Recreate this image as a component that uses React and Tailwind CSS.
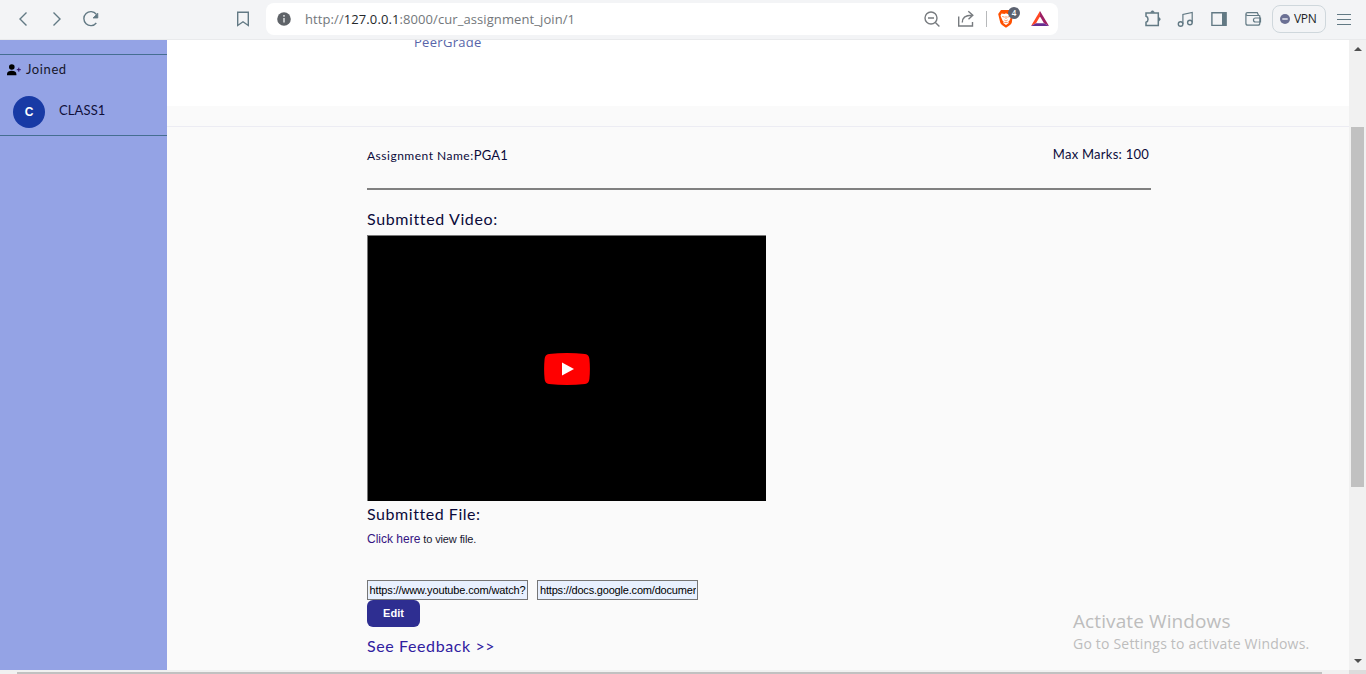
import React from 'react';

const heading = "font-['Lato',sans-serif] text-[#0b0b3b]";

function Icon({ children, className = '' }) {
  return (
    <svg
      viewBox="0 0 20 20"
      fill="none"
      stroke="currentColor"
      strokeWidth="1.4"
      className={`size-5 shrink-0 ${className}`}
    >
      {children}
    </svg>
  );
}

function AddressBar() {
  return (
    <div className="ml-[13px] flex h-8 w-[792px] shrink-0 items-center rounded-lg bg-white px-2 text-[#777b7f]">
      <Icon>
        <circle cx="10" cy="10" r="6.8" fill="#5f6368" stroke="none" />
        <path d="M10 9v4.5M10 6v1.7" stroke="#d5d7d9" strokeWidth="1.6" />
      </Icon>
      <div className="ml-[11px] whitespace-nowrap font-['Open_Sans',sans-serif] text-[13px] leading-5 tracking-[0.09px] text-[#73777b]">
        http://<span className="text-[#25282b]">127.0.0.1</span>:8000/cur_assignment_join/1
      </div>
      <Icon className="ml-auto">
        <circle cx="9" cy="9" r="6" />
        <path d="M6 9h6M13.4 13.4l4 4" />
      </Icon>
      <Icon className="ml-3.5">
        <path d="M2.7 7.5V17h13.8v-4M6.3 13.5c0-4.8 3.5-7.3 9.2-7.3M12.3 2.3l4.5 3.9-4.3 4" />
      </Icon>
      <div className="ml-2.5 h-4 w-px bg-[#b7b9bb]" />
      <div className="relative ml-[9px] size-5">
        <Icon>
          <path d="M5 1h9l3 4-1.2 8.5c-.4 2-3.3 3.6-5.8 5.2-2.500-1.600-5.200-3.200-5.800-5.200L2.200 5z" fill="#ff5000" stroke="none" />
          <path d="M5.500 4.500l3 .4L10 4.300l1.500.6 3-.4 1 2.300-2 4.700-1.200 1.300.5 1.200L10 15.900 7.200 14l.5-1.200-1.200-1.300-2-4.700z" fill="#fff" stroke="none" />
          <path d="M6.200 7.400l2.500.8M13.800 7.400l-2.500.8M10 7v3M8.300 11l1.700 1 1.700-1M8.300 13.500h3.400" stroke="#ff5000" strokeWidth=".6" />
        </Icon>
        <span className="absolute left-3 -top-[2px] flex size-3 items-center justify-center rounded-full bg-[#5c6270] font-['Open_Sans',sans-serif] text-[8px] font-semibold text-white">
          4
        </span>
      </div>
      <svg viewBox="0 0 20 20" className="ml-3.5 size-5">
        <path d="M10 2L1 17l5-2.8L10 7.5z" fill="#ff4724" />
        <path d="M10 2l9 15-5-2.8L10 7.5z" fill="#9e1f63" />
        <path d="M1 17h18l-5-2.8H6z" fill="#662d91" />
      </svg>
    </div>
  );
}

function Toolbar() {
  return (
    <header className="flex h-10 shrink-0 items-center border-b border-[#e9eaec] bg-[#f3f4f6] pb-px pl-[13px] text-[#627984]">
      <Icon><path d="M13.5 3.5L7 10l6.5 6.5" /></Icon>
      <Icon className="ml-3.5"><path d="M6.5 3.5L13 10l-6.5 6.5" /></Icon>
      <Icon className="ml-3.5">
        <path d="M15.3 5.2A7 7 0 1 0 15.3 14" />
        <path d="M16.8 4.2v4.8h-4.8z" fill="currentColor" strokeWidth=".8" />
      </Icon>
      <Icon className="ml-[132px]">
        <path d="M4.7 3.2h10.6v13.3L10 12.8l-5.3 3.7z" />
      </Icon>
      <AddressBar />
      <Icon className="ml-[85px]">
        <path d="M3 4h12.3v12.5H3v-3.2c2.7-.8 2.7-5.200 0-6z" strokeWidth="1.5" />
        <path d="M7.7 3.500c.3-2.200 3.300-2.200 3.600 0zM15.700 8.500c2.200.3 2.200 3.200 0 3.500z" fill="currentColor" strokeWidth=".5" />
      </Icon>
      <Icon className="ml-[13px]">
        <circle cx="4.6" cy="15" r="2.3" />
        <circle cx="13.9" cy="13.5" r="2.3" />
        <path d="M6.9 15V5.5l9.300-2v10" strokeWidth="1.2" />
      </Icon>
      <Icon className="ml-[13px]">
        <path d="M2.9 3.7h14.2v12.7H2.9z" />
        <path d="M13 3.5h4.200v13H13z" fill="currentColor" stroke="none" />
      </Icon>
      <Icon className="ml-3.5">
        <path d="M16.800 6.500H4.500c-2.100 0-2.100-2.800 0-2.800h9.800l1.200 2.500M2.900 5v9.200c0 1.300.7 2 2 2h10c1.300 0 1.900-.7 1.900-2V6.500M17.500 9h-5c-2.700 0-2.700 4 0 4h5z" strokeWidth="1.2" />
      </Icon>
      <div className="ml-[9px] flex h-7 w-[54px] shrink-0 items-center rounded-lg border border-[#cfd7dc] pl-[7px]">
        <svg viewBox="0 0 10 10" className="size-2.5">
          <circle cx="5" cy="5" r="5" fill="#6b7094" />
          <path d="M2.3 5h5.4" stroke="#dfe1eb" strokeWidth="1.6" />
        </svg>
        <span className="ml-1 font-['Open_Sans',sans-serif] text-[12px] leading-4 tracking-[-0.3px] text-[#202427]">VPN</span>
      </div>
      <Icon className="ml-2"><path d="M3 5.500h14M3 10.500h14M3 15.500h14" strokeWidth="1" /></Icon>
    </header>
  );
}

function Sidebar() {
  return (
    <aside className="w-[167px] shrink-0 bg-[#94a3e5] pt-3.5">
      <section className="h-[82px] border-y border-[#456e91]">
        <div className="flex h-[30px] items-center pl-[7px]">
          <svg viewBox="0 0 14 12" className="h-3 w-3.5">
            <circle cx="4.8" cy="3" r="2.8" />
            <path d="M0 11.2V10c0-4.3 9.4-4.3 9.4 0v1.2z" />
            <path d="M11.8 3.7v4M9.8 5.7h4" stroke="#280a62" strokeWidth="1" />
          </svg>
          <span className="ml-[5px] font-['Lato',sans-serif] text-[13px] tracking-[0.6px] text-[#16162b]">Joined</span>
        </div>
        <div className="flex items-center pl-[13px] pt-[11px]">
          <span className="flex size-8 items-center justify-center rounded-full bg-[#183aa5] font-['Liberation_Sans',sans-serif] text-[12px] font-bold text-white">C</span>
          <span className="mb-0.5 ml-3.5 font-['Lato',sans-serif] text-[13px] tracking-[0.12px] text-[#10103a]">CLASS1</span>
        </div>
      </section>
    </aside>
  );
}

function Assignment() {
  return (
    <main className="min-w-0 flex-1 bg-[#fafafa]">
      <div className="h-[66px] overflow-hidden bg-white pl-[247px]">
        <div className="-mt-2 font-['Open_Sans',sans-serif] text-[13px] font-medium leading-5 tracking-[0.3px] text-[#5865a9]">PeerGrade</div>
      </div>
      <div className="h-[21px] border-b border-[#ececf3]" />
      <div className="ml-[200px] w-[784px]">
        <div className={`flex h-[63px] items-start justify-between border-b-2 border-[#808080] pr-0.5 pt-[17px] leading-5 ${heading}`}>
          <div className="whitespace-nowrap">
            <span className="text-[12px] tracking-[0.5px]">Assignment Name:</span>
            <span className="text-[13px] tracking-[0.15px]">PGA1</span>
          </div>
          <div className="whitespace-nowrap text-[13px] tracking-[0.25px]">Max Marks: 100</div>
        </div>
        <h2 className={`pt-[17px] text-[16px] leading-6 tracking-[0.62px] ${heading}`}>Submitted Video:</h2>
        <div className="mt-1 flex h-[266px] w-[399px] items-center justify-center border-l border-t border-[#777] bg-black">
          <svg viewBox="0 0 46 32" className="h-8 w-[46px]">
            <path d="M5 1Q23-.8 41 1q4 .5 4.4 5 1 10 0 20-.4 4.5-4.4 5-18 1.8-36 0-4-.5-4.4-5-1-10 0-20Q1 1.5 5 1z" fill="#f00" />
            <path d="M18 9.5L30 16l-12 6.5z" fill="#fff" />
          </svg>
        </div>
        <h2 className={`pt-px text-[16px] leading-6 tracking-[0.55px] ${heading}`}>Submitted File:</h2>
        <p className="mt-[3px] font-['Liberation_Sans',sans-serif] text-[11px] leading-5 tracking-[-0.12px] text-[#17172f]">
          <a className="text-[12px] tracking-[0px] text-[#341482]">Click here</a> to view file.
        </p>
        <div className="mt-[31px] flex gap-[9px] font-['Liberation_Sans',sans-serif] text-[11px] text-black">
          <div className="h-5 w-[161px] whitespace-nowrap border border-[#767676] bg-[#e8f0fe] pl-[1.5px] leading-[18px] tracking-[-0.14px]">https://www.youtube.com/watch?</div>
          <div className="h-5 w-[161px] border border-[#767676] bg-[#e8f0fe] pl-0.5 pr-px">
            <div className="overflow-hidden whitespace-nowrap leading-[18px] tracking-[-0.19px]">https://docs.google.com/document</div>
          </div>
        </div>
        <button className="block h-[27px] w-[53px] rounded-md bg-[#2e2e91] font-['Liberation_Sans',sans-serif] text-[11px] font-bold text-white">Edit</button>
        <a className="mt-[7px] block font-['Lato',sans-serif] text-[16px] leading-6 tracking-[0.6px] text-[#3020a0]">See Feedback &gt;&gt;</a>
      </div>
    </main>
  );
}

function Scrollbar() {
  return (
    <div className="flex w-[17px] shrink-0 flex-col items-center bg-[#f1f1f1]">
      <svg viewBox="0 0 8 4" className="mt-[7px] h-1 w-2 shrink-0"><path d="M0 4l4-4 4 4z" fill="#505050" /></svg>
      <div className="mt-[76px] h-[360px] w-[13px] bg-[#c1c1c1]" />
      <svg viewBox="0 0 8 4" className="mb-[7px] mt-auto h-1 w-2"><path d="M0 0l4 4 4-4z" fill="#505050" /></svg>
    </div>
  );
}

export default function App() {
  return (
    <div className="relative flex h-[674px] w-[1366px] flex-col overflow-hidden bg-white">
      <Toolbar />
      <div className="flex h-[630px] shrink-0">
        <Sidebar />
        <Assignment />
        <Scrollbar />
      </div>
      <div className="flex h-1 shrink-0 bg-[#f1f1f1]">
        <div className="ml-[17px] mt-0.5 h-0.5 w-[1305px] bg-[#c1c1c1]" />
        <div className="ml-[27px] h-1 w-[17px] bg-[#dcdcdc]" />
      </div>
      <div className="absolute left-[1073px] top-[609px] whitespace-nowrap font-['Open_Sans',sans-serif] text-[#bdbdbd]">
        <div className="text-[19px] leading-6 tracking-[0.1px]">Activate Windows</div>
        <div className="text-[14px] leading-[22px] tracking-[0.2px]">Go to Settings to activate Windows.</div>
      </div>
    </div>
  );
}
